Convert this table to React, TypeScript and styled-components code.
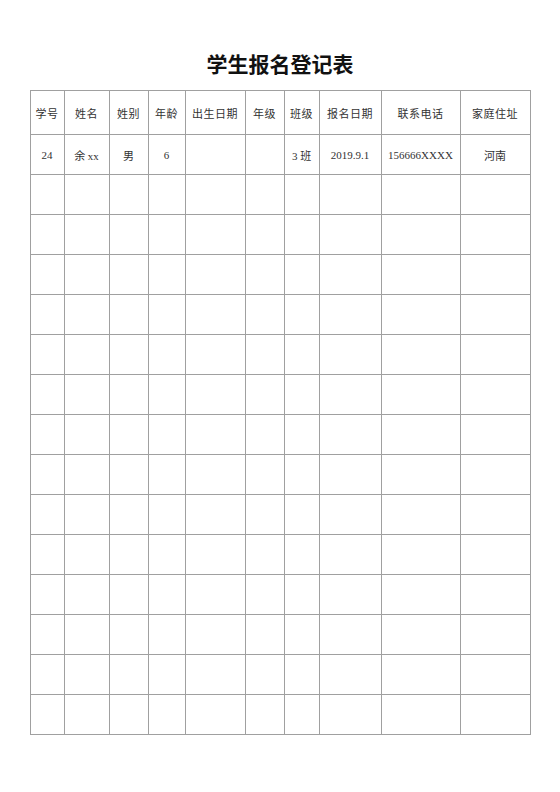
import React from "react";
import styled, { createGlobalStyle } from "styled-components";

const Global = createGlobalStyle`
  html, body { margin: 0; padding: 0; background: #ffffff; }
  body { font-family: "Liberation Serif", "Noto Sans CJK SC", serif; }
`;

const Page = styled.div`
  width: 560px;
  height: 792px;
  box-sizing: border-box;
  padding: 48px 30px 0;
  display: flex;
  flex-direction: column;
  align-items: center;
  background: #fff;
`;

const Title = styled.h1`
  margin: 0 0 12px;
  height: 30px;
  line-height: 30px;
  font-family: "Noto Sans CJK SC", sans-serif;
  font-size: 21px;
  font-weight: 700;
  color: #111;
  letter-spacing: 0;
`;

const Table = styled.table`
  width: 500px;
  border-collapse: collapse;
  table-layout: fixed;
  color: #333;
  font-size: 11px;
`;

const Row = styled.tr<{ $h: number }>`
  height: ${(p) => p.$h}px;
`;

const Cell = styled.td`
  border: 1px solid #a0a0a0;
  padding: 0;
  text-align: center;
  vertical-align: middle;
  white-space: nowrap;
  font-family: "Liberation Serif", "Noto Sans CJK SC", serif;
`;

const HeadCell = styled(Cell).attrs({ as: "th" })`
  font-weight: 400;
  letter-spacing: 0.5px;
`;

const widths = [34, 45, 39, 37, 60, 39, 35, 62, 79, 70];
const headers = ["学号", "姓名", "姓别", "年龄", "出生日期", "年级", "班级", "报名日期", "联系电话", "家庭住址"];
const first = ["24", "余 xx", "男", "6", "", "", "3 班", "2019.9.1", "156666XXXX", "河南"];

export default function App() {
  const empty = Array.from({ length: 14 }, (_, i) => i);
  return (
    <>
      <Global />
      <Page>
        <Title>学生报名登记表</Title>
        <Table>
          <colgroup>
            {widths.map((w, i) => (
              <col key={i} style={{ width: w }} />
            ))}
          </colgroup>
          <thead>
            <Row $h={44}>
              {headers.map((h) => (
                <HeadCell key={h}>{h}</HeadCell>
              ))}
            </Row>
          </thead>
          <tbody>
            <Row $h={40}>
              {first.map((v, i) => (
                <Cell key={i}>{v}</Cell>
              ))}
            </Row>
            {empty.map((r) => (
              <Row $h={40} key={r}>
                {widths.map((_, i) => (
                  <Cell key={i} />
                ))}
              </Row>
            ))}
          </tbody>
        </Table>
      </Page>
    </>
  );
}
